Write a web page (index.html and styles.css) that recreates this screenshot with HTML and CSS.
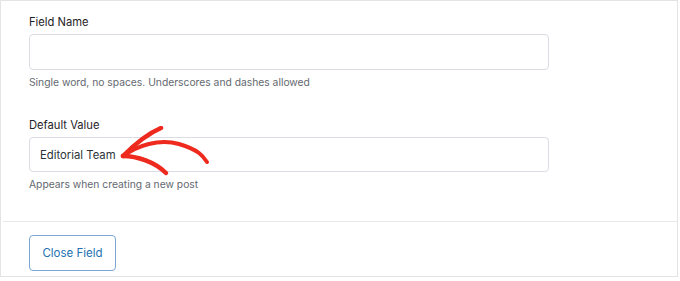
FILE: index.html
```html
<!DOCTYPE html>
<html>
<head>
<meta charset="utf-8">
<link rel="stylesheet" href="styles.css">
</head>
<body>
<div class="card">
  <div class="body">
    <div class="field">
      <div class="label">Field Name</div>
      <div class="input"></div>
      <div class="help">Single word, no spaces. Underscores and dashes allowed</div>
    </div>
    <div class="field field-2">
      <div class="label">Default Value</div>
      <div class="input input-2"><span class="value">Editorial Team</span>
        <svg class="arrow" width="100" height="60" viewBox="0 0 100 60">
          <path d="M4 30 C 18 20, 40 12, 60 18 S 84 30, 88 36" fill="none" stroke="#ee2a1e" stroke-width="4" stroke-linecap="round"/>
          <path d="M4 30 C 14 20, 28 8, 42 2" fill="none" stroke="#ee2a1e" stroke-width="4.5" stroke-linecap="round"/>
          <path d="M4 30 C 18 30, 36 36, 47 47" fill="none" stroke="#ee2a1e" stroke-width="4.5" stroke-linecap="round"/>
        </svg>
      </div>
      <div class="help">Appears when creating a new post</div>
    </div>
  </div>
  <div class="footer">
    <button class="btn">Close Field</button>
  </div>
</div>
</body>
</html>
```

FILE: styles.css
```css
html, body {
  margin: 0;
  padding: 0;
  background: #ffffff;
}
body {
  font-family: Inter, "Noto Sans", "Liberation Sans", sans-serif;
  width: 680px;
  height: 281px;
  overflow: hidden;
}
.card {
  width: 676px;
  height: 275px;
  border: 1px solid #e4e4e4;
  background: #ffffff;
  display: flex;
  flex-direction: column;
}
.body {
  padding: 11px 0 0 28px;
  height: 209px;
}
.field-2 {
  margin-top: 24px;
}
.label {
  font-size: 11.2px;
  line-height: 20px;
  color: #1e2327;
  margin-bottom: 2px;
}
.input {
  box-sizing: border-box;
  width: 520px;
  height: 36px;
  border: 1px solid #dcdce4;
  border-radius: 4px;
  position: relative;
}
.input-2 {
  height: 35px;
  display: flex;
  align-items: center;
  padding-left: 10px;
}
.value {
  font-size: 11.3px;
  color: #2c3338;
}
.arrow {
  position: absolute;
  left: 89px;
  top: -12px;
}
.help {
  margin-top: 3px;
  font-size: 10.3px;
  line-height: 18px;
  color: #646970;
}
.footer {
  margin-left: 2px;
  border-top: 1px solid #e8e8e8;
  padding: 13px 0 0 26px;
}
.btn {
  box-sizing: border-box;
  width: 87px;
  height: 36px;
  background: #ffffff;
  border: 1px solid #7aa7d6;
  border-radius: 4px;
  color: #2271b1;
  font-family: Inter, "Noto Sans", "Liberation Sans", sans-serif;
  font-size: 11.5px;
  padding: 0;
}
```
